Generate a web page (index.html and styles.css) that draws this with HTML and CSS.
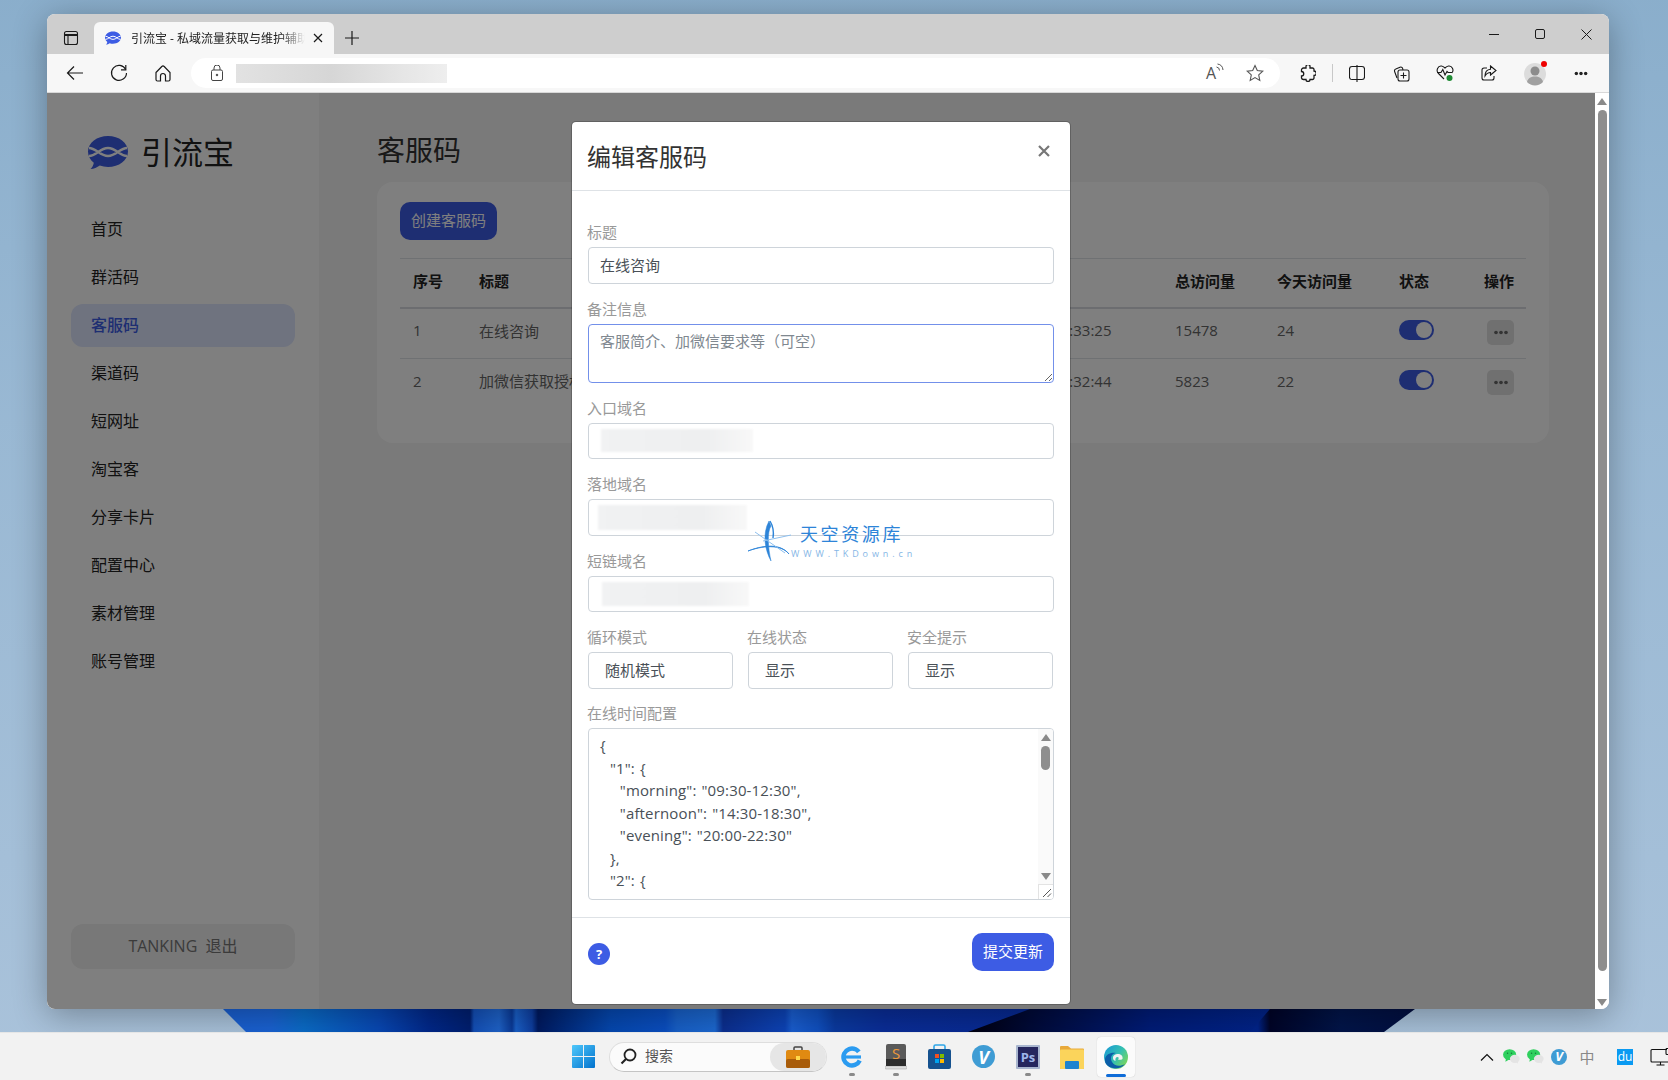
FILE: index.html
```html
<!DOCTYPE html>
<html lang="zh-CN">
<head>
<meta charset="utf-8">
<title>引流宝 - 私域流量获取与维护辅助工具</title>
<link rel="stylesheet" href="styles.css">
</head>
<body>
<svg class="defs" width="0" height="0" aria-hidden="true">
  <symbol id="brand" viewBox="0 0 40 33">
    <path fill="currentColor" d="M20 0C31 0 40 6.8 40 15.5S31 31 20 31c-3 0-5.700-.5-8.200-1.400C9 31.500 6 33 2.500 33c1.700-1.500 3-3.700 3.300-6.300C2.200 24 0 20 0 15.500 0 6.800 9 0 20 0Z"/>
    <path fill="none" stroke="#fff" stroke-width="2.500" d="M1 12C8 12 12 20 20 20S32 12 39 12M1 20C8 20 12 12 20 12S32 20 39 20"/>
  </symbol>
  <symbol id="resize" viewBox="0 0 10 10">
    <path fill="none" stroke="#555" stroke-width="1" d="M1 9 9 1M5.500 9 9 5.500"/>
  </symbol>
  <symbol id="dots" viewBox="0 0 18 6">
    <circle cx="3" cy="3" r="2.200" fill="currentColor"/><circle cx="9" cy="3" r="2.200" fill="currentColor"/><circle cx="15" cy="3" r="2.200" fill="currentColor"/>
  </symbol>
  <symbol id="wechat" viewBox="0 0 18 16">
    <ellipse cx="7" cy="6" rx="7" ry="5.800" fill="#2fd05e"/><path d="M3 10 2.500 13.500 7 11Z" fill="#2fd05e"/>
    <ellipse cx="12.500" cy="10.500" rx="5.200" ry="4.300" fill="#e4e4e4"/><path d="M14 14 16 15.800 15.700 13Z" fill="#e4e4e4"/>
    <circle cx="4.800" cy="4.600" r=".8" fill="#14803a"/><circle cx="9" cy="4.600" r=".8" fill="#14803a"/>
  </symbol>
</svg>

<div class="desktop">
  <div class="wallpaper"></div>

  <div class="browser">
    <div class="tabstrip">
      <div class="slot-tabs">
        <svg width="16" height="16" viewBox="0 0 16 16" fill="none" stroke="#1a1a1a" stroke-width="1.100"><rect x="1.500" y="1.500" width="13" height="13" rx="2"/><path d="M1.500 5H14.500" stroke-width="2"/><path d="M5 5V14.500"/></svg>
      </div>
      <div class="tab">
        <svg class="tab-fav" width="16" height="16"><use href="#brand"/></svg>
        <span class="tab-title">引流宝 - 私域流量获取与维护辅助</span>
        <svg class="tab-close" width="10" height="10" viewBox="0 0 10 10" stroke="#1a1a1a" stroke-width="1.200"><path d="M1 1 9 9M9 1 1 9"/></svg>
      </div>
      <div class="tab-new">
        <svg width="14" height="14" viewBox="0 0 14 14" stroke="#1a1a1a" stroke-width="1.200"><path d="M7 0V14M0 7H14"/></svg>
      </div>
      <div class="winctl">
        <span class="winbtn"><svg width="10" height="10" viewBox="0 0 10 10" stroke="#1a1a1a"><path d="M0 5.500H10"/></svg></span>
        <span class="winbtn"><svg width="10" height="10" viewBox="0 0 10 10" fill="none" stroke="#1a1a1a"><rect x=".5" y=".5" width="9" height="9" rx="1.500"/></svg></span>
        <span class="winbtn"><svg width="11" height="11" viewBox="0 0 11 11" stroke="#1a1a1a"><path d="M.5.5 10.500 10.500M10.500.5.5 10.500"/></svg></span>
      </div>
    </div>

    <div class="toolbar">
      <span class="tool"><svg width="18" height="16" viewBox="0 0 18 16" fill="none" stroke="#1a1a1a" stroke-width="1.200"><path d="M17 8H1.500M8 1.500 1.500 8 8 14.500"/></svg></span>
      <span class="tool"><svg width="18" height="18" viewBox="0 0 18 18" fill="none" stroke="#1a1a1a" stroke-width="1.200"><path d="M15.700 5.500A7.500 7.500 0 1 0 16.500 9"/><path d="M15.800 1V5.800H11"/></svg></span>
      <span class="tool"><svg width="16" height="17" viewBox="0 0 16 17" fill="none" stroke="#1a1a1a" stroke-width="1.200"><path d="M1 7.500 6.800 1.500a1.700 1.700 0 0 1 2.400 0L15 7.500V14.500a1.500 1.500 0 0 1-1.500 1.500H10.500V11a2.500 2.500 0 0 0-5 0V16H2.500A1.500 1.500 0 0 1 1 14.500Z"/></svg></span>
      <div class="address">
        <span class="addr-lock"><svg width="12" height="16" viewBox="0 0 12 16" fill="none" stroke="#444" stroke-width="1"><rect x=".5" y="5" width="11" height="10.500" rx="1.500"/><path d="M3 5V3a3 3 0 0 1 6 0V5"/><circle cx="6" cy="10" r=".8" fill="#444"/></svg></span>
        <span class="addr-blur"></span>
        <span class="addr-tool addr-first"><span class="read-a">A</span><svg width="8" height="9" viewBox="0 0 8 9" fill="none" stroke="#555" stroke-width="1"><path d="M.5 4a3.500 3.500 0 0 1 3 3.500M1.500 1a6.500 6.500 0 0 1 5.500 6"/></svg></span>
        <span class="addr-tool"><svg width="18" height="18" viewBox="0 0 18 18" fill="none" stroke="#555" stroke-width="1.100"><path d="M9 1.500 11.300 6.600 16.800 7.200 12.700 10.900 13.800 16.400 9 13.600 4.200 16.400 5.300 10.900 1.200 7.200 6.700 6.600Z"/></svg></span>
      </div>
      <span class="tool tool-puzzle"><svg width="16" height="17" viewBox="0 0 16 17" fill="none" stroke="#1a1a1a" stroke-width="1.300"><path d="M6 1.500a2 2 0 0 1 4 0V3h2.500a1.500 1.500 0 0 1 1.500 1.500V6a2.200 2.200 0 0 1 0 4.500V13a1.500 1.500 0 0 1-1.500 1.500H10a2 2 0 0 1-4 0H3.500A2 2 0 0 1 1.500 13V11a2 2 0 0 0 0-4.500V5a2 2 0 0 1 2-2H6Z"/></svg></span>
      <span class="tool-sep"></span>
      <span class="tool"><svg width="16" height="17" viewBox="0 0 16 17" fill="none" stroke="#1a1a1a" stroke-width="1.100"><rect x=".5" y="1.500" width="15" height="13" rx="2.500"/><path d="M8 0V17"/></svg></span>
      <span class="tool"><svg width="17" height="17" viewBox="0 0 17 17" fill="none" stroke="#1a1a1a" stroke-width="1.100"><path d="M4 13 1.600 6.500a2 2 0 0 1 1.200-2.600L7 2.200a2 2 0 0 1 2.600 1.200L10 5"/><rect x="5" y="5" width="11" height="11" rx="2"/><path d="M10.500 7.500V13.500M7.500 10.500H13.500"/></svg></span>
      <span class="tool"><svg width="18" height="18" viewBox="0 0 18 18" fill="none" stroke="#1a1a1a" stroke-width="1.100"><path d="M8 15 2.500 9.500C-.5 6.500 2 1.500 5.500 2c1.500.2 2.500 1 3.500 2 1-1 2-1.800 3.500-2C16 1.500 18.500 6 15.800 9"/><path d="M1 8.500H5L6.800 5.500 9 11 11 7.500 12 8.500H16"/><circle cx="13.500" cy="14" r="3" fill="#1f8a34" stroke="none"/></svg></span>
      <span class="tool"><svg width="16" height="16" viewBox="0 0 16 16" fill="none" stroke="#1a1a1a" stroke-width="1.100"><path d="M6 3H3a2 2 0 0 0-2 2V13a2 2 0 0 0 2 2H11a2 2 0 0 0 2-2V11"/><path d="M9.500 1 15 5.500 9.500 10V7.500C7 7.500 5.500 8.500 4 11c0-4 2-6.500 5.500-6.800Z"/></svg></span>
      <span class="tool tool-avatar">
        <svg width="24" height="26" viewBox="0 0 24 26"><circle cx="11" cy="14" r="11" fill="#dcdcdc"/><circle cx="11" cy="11" r="4.500" fill="#8c8c8c"/><path d="M3 22c1-4 4-5.500 8-5.500s7 1.500 8 5.500a11 11 0 0 1-16 0Z" fill="#a0a0a0"/><circle cx="20" cy="4" r="3" fill="#ee0000"/></svg>
      </span>
      <span class="tool tool-more"><svg width="14" height="5" viewBox="0 0 18 6" class="tool-dots"><use href="#dots"/></svg></span>
    </div>

    <div class="view">
      <div class="page">
        <aside class="sidebar">
          <div class="brand">
            <svg class="brand-logo" width="40" height="33"><use href="#brand"/></svg>
            <span class="brand-name">引流宝</span>
          </div>
          <nav class="nav">
            <a class="nav-item">首页</a>
            <a class="nav-item">群活码</a>
            <a class="nav-item active">客服码</a>
            <a class="nav-item">渠道码</a>
            <a class="nav-item">短网址</a>
            <a class="nav-item">淘宝客</a>
            <a class="nav-item">分享卡片</a>
            <a class="nav-item">配置中心</a>
            <a class="nav-item">素材管理</a>
            <a class="nav-item">账号管理</a>
          </nav>
          <div class="logout">TANKING&nbsp;&nbsp;退出</div>
        </aside>
        <main class="main">
          <h1 class="page-title">客服码</h1>
          <section class="card">
            <button class="btn-create">创建客服码</button>
            <table class="table">
              <thead>
                <tr>
                  <th class="c1">序号</th><th class="c2">标题</th><th class="c3">创建时间</th><th class="c4">总访问量</th><th class="c5">今天访问量</th><th class="c6">状态</th><th class="c7">操作</th>
                </tr>
              </thead>
              <tbody>
                <tr>
                  <td class="lead">1</td><td class="lead">在线咨询</td><td class="time">2022-08-26 10:33:25</td><td>15478</td><td>24</td>
                  <td class="ctl"><span class="toggle"></span></td>
                  <td class="ctl"><span class="more"><svg width="16" height="5"><use href="#dots"/></svg></span></td>
                </tr>
                <tr>
                  <td class="lead">2</td><td class="lead">加微信获取授权码</td><td class="time">2022-08-26 10:32:44</td><td>5823</td><td>22</td>
                  <td class="ctl"><span class="toggle"></span></td>
                  <td class="ctl"><span class="more"><svg width="16" height="5"><use href="#dots"/></svg></span></td>
                </tr>
              </tbody>
            </table>
          </section>
        </main>

        <div class="overlay">
          <div class="modal">
            <header class="modal-head">
              <h2 class="modal-title">编辑客服码</h2>
              <svg class="modal-x" width="12" height="12" viewBox="0 0 12 12" stroke="#777" stroke-width="2.200"><path d="M1 1 11 11M11 1 1 11"/></svg>
            </header>
            <div class="modal-body">
              <div class="group">
                <label class="label">标题</label>
                <input class="field input-text" value="在线咨询">
              </div>
              <div class="group">
                <label class="label">备注信息</label>
                <textarea class="field area" placeholder="客服简介、加微信要求等（可空）"></textarea>
              </div>
              <div class="group">
                <label class="label">入口域名</label>
                <div class="field"><span class="blur blur-a"></span></div>
              </div>
              <div class="group">
                <label class="label">落地域名</label>
                <div class="field"><span class="blur blur-b"></span></div>
              </div>
              <div class="group">
                <label class="label">短链域名</label>
                <div class="field"><span class="blur blur-c"></span></div>
              </div>
              <div class="triple">
                <div class="cell">
                  <label class="label">循环模式</label>
                  <select class="field pick"><option>随机模式</option></select>
                </div>
                <div class="cell">
                  <label class="label">在线状态</label>
                  <select class="field pick"><option>显示</option></select>
                </div>
                <div class="cell">
                  <label class="label">安全提示</label>
                  <select class="field pick"><option>显示</option></select>
                </div>
              </div>
              <div class="group-last">
                <label class="label">在线时间配置</label>
                <div class="json">
                  <pre class="json-text">{
  "1": {
    "morning": "09:30-12:30",
    "afternoon": "14:30-18:30",
    "evening": "20:00-22:30"
  },
  "2": {
    "morning": "09:30-12:30",
    "afternoon": "14:30-18:30"
  }
}</pre>
                  <div class="sb">
                    <span class="arrow-up"></span>
                    <span class="sb-thumb"></span>
                    <span class="arrow-down sb-down"></span>
                    <span class="sb-corner"><svg width="10" height="10"><use href="#resize"/></svg></span>
                  </div>
                </div>
              </div>
            </div>
            <footer class="modal-foot">
              <span class="help">?</span>
              <button class="btn-submit">提交更新</button>
            </footer>

            <div class="watermark">
              <svg class="wm-star" width="64" height="44" viewBox="0 0 64 44" fill="none">
                <path d="M1 31C14 26 32 22 42 34 36 26 20 24 1 31Z" fill="#2d84d8" stroke="#2d84d8" stroke-width=".8"/>
                <path d="M22 1C15 14 18 30 24 41 21 28 20 12 24 6Z" fill="#2d84d8" stroke="#2d84d8" stroke-width=".5"/>
                <path d="M23 1C26 6 27 12 26 18" stroke="#2d84d8" stroke-width="1.400"/>
                <path d="M8 12 38 33M16 21 44 15" stroke="#8dbfee" stroke-width="1"/>
              </svg>
              <div class="wm-text">
                <span class="wm-cn">天空资源库</span>
                <span class="wm-en">WWW.TKDown.cn</span>
              </div>
            </div>
          </div>
        </div>
      </div>
      <div class="page-sb">
        <span class="arrow-up"></span>
        <span class="page-thumb"></span>
        <span class="arrow-down"></span>
      </div>
    </div>
  </div>

  <div class="taskbar">
    <svg class="win-logo" width="23" height="23" viewBox="0 0 23 23">
      <defs>
        <linearGradient id="wg" x1="0" y1="0" x2="1" y2="1"><stop offset="0" stop-color="#4fc8fb"/><stop offset="1" stop-color="#0272cd"/></linearGradient>
      </defs>
      <path fill="url(#wg)" d="M0 1a1 1 0 0 1 1-1H11V11H0ZM12 0H22a1 1 0 0 1 1 1V11H12ZM0 12H11V23H1a1 1 0 0 1-1-1ZM12 12H23V22a1 1 0 0 1-1 1H12Z"/>
    </svg>
    <div class="search">
      <svg class="search-ic" width="17" height="17" viewBox="0 0 17 17" fill="none" stroke="#222" stroke-width="1.800"><circle cx="10" cy="7" r="5.500"/><path d="M6 11 1.500 15.500" stroke-width="2.200"/></svg>
      <span class="search-text">搜索</span>
      <span class="search-badge">
        <svg width="24" height="22" viewBox="0 0 24 22"><path d="M8 4V2a1 1 0 0 1 1-1h6a1 1 0 0 1 1 1V4" fill="none" stroke="#444" stroke-width="1.500"/><rect y="4" width="24" height="18" rx="2" fill="#e08a12"/><rect y="13" width="24" height="9" rx="2" fill="#a85c0a"/><rect x="10" y="10" width="4" height="4" fill="#ffd84a"/></svg>
      </span>
    </div>
    <div class="apps">
      <span class="app dot"><svg width="22" height="24" viewBox="0 0 22 24" fill="none"><circle cx="11" cy="12" r="8.500" stroke="#2b9bf0" stroke-width="4.500" stroke-dasharray="44 9" transform="rotate(25 11 12)"/><path d="M3 12H20" stroke="#2b9bf0" stroke-width="3.200"/></svg></span>
      <span class="app dot"><svg width="22" height="26" viewBox="0 0 22 26"><rect x="0" y="22" width="22" height="3" rx="1" fill="#ddd" stroke="#999" stroke-width=".5"/><rect x="1" y="0" width="20" height="22" rx="2" fill="#5a5a5a"/><rect x="1" y="15" width="20" height="7" fill="#2c2c2c"/><text x="11" y="15" class="sub-s">S</text></svg></span>
      <span class="app"><svg width="23" height="25" viewBox="0 0 23 25"><path d="M6 6V2.500A1.500 1.500 0 0 1 7.500 1h8A1.500 1.500 0 0 1 17 2.500V6" fill="none" stroke="#2fa6e8" stroke-width="1.600"/><rect y="5" width="23" height="20" rx="2" fill="#16528f"/><rect x="7" y="10" width="4" height="4" fill="#f25022"/><rect x="12" y="10" width="4" height="4" fill="#7fba00"/><rect x="7" y="15" width="4" height="4" fill="#00a4ef"/><rect x="12" y="15" width="4" height="4" fill="#ffb900"/></svg></span>
      <span class="app"><span class="v-ic">V</span></span>
      <span class="app dot"><svg width="24" height="24" viewBox="0 0 24 24"><rect width="24" height="24" rx="1" fill="#a9b6cf"/><rect x="2" y="2" width="20" height="20" fill="#25265e"/><text x="12" y="17" class="ps-t">Ps</text></svg></span>
      <span class="app"><svg width="24" height="24" viewBox="0 0 24 24"><path d="M0 2a1 1 0 0 1 1-1H8L11 3.500H23a1 1 0 0 1 1 1V23a1 1 0 0 1-1 1H1a1 1 0 0 1-1-1Z" fill="#e8a93b"/><rect y="4.500" width="24" height="19.500" rx="1" fill="#fbd45b"/><rect x="5" y="16" width="14" height="8" rx="1" fill="#1e83cf"/></svg></span>
      <span class="app app-on"><svg width="24" height="24" viewBox="0 0 24 24"><defs><linearGradient id="eg" x1="0" y1="0" x2="1" y2=".7"><stop offset="0" stop-color="#1796d8"/><stop offset=".6" stop-color="#35c1b0"/><stop offset="1" stop-color="#7ad65a"/></linearGradient></defs><circle cx="12" cy="12" r="12" fill="url(#eg)"/><path d="M1 14C2 9 7 7 12 8 7 9 6 13 8 17c2 4 8 5 13 2-3 4-8 5-12 4C4 22 .5 19 1 14Z" fill="#0c5ea8"/><path d="M9 13c0-3 2.500-4 5-4 3.500 0 5 2.500 4.500 5-1 1-3.500 1-4.500.5 1-1 1-2.500-.5-2.500S11 13.500 11.500 16C10 15.500 9 14.500 9 13Z" fill="#f2f2f2"/></svg></span>
    </div>
    <div class="tray">
      <span class="tray-i"><svg width="14" height="8" viewBox="0 0 14 8" fill="none" stroke="#111" stroke-width="1.200"><path d="M1 7.500 7 1.500 13 7.500"/></svg></span>
      <span class="tray-i"><svg width="17" height="15"><use href="#wechat"/></svg></span>
      <span class="tray-i"><svg width="17" height="15"><use href="#wechat"/></svg></span>
      <span class="tray-i"><span class="v-ic v-small">V</span></span>
      <span class="tray-i tray-ime">中</span>
      <span class="tray-i tray-du"><span class="du">du</span></span>
      <span class="tray-i tray-mon"><svg width="24" height="18" viewBox="0 0 24 18" fill="none" stroke="#111" stroke-width="1.100"><path d="M17 1.500H2a1 1 0 0 0-1 1V13a1 1 0 0 0 1 1H19a1 1 0 0 0 1-1V9M10.500 14V17M6.500 17H14.500"/><rect x="16" y=".5" width="7" height="6" rx="1"/></svg></span>
    </div>
  </div>
</div>
</body>
</html>
```

FILE: styles.css
```css
* { box-sizing: border-box; }
html, body { margin: 0; height: 100%; overflow: hidden; }
body { font-family: "Open Sans", "Noto Sans CJK SC", sans-serif; color: #212529; }
.defs { position: absolute; }
svg { display: block; flex: none; }

.desktop {
  position: relative;
  width: 1668px;
  height: 1080px;
  overflow: hidden;
  background:
    linear-gradient(180deg, rgba(135,172,202,.9) 0, rgba(143,178,207,.6) 40%, rgba(172,196,220,.2) 100%),
    #a9c2da;
}
.wallpaper {
  position: absolute;
  left: 0; right: 0; top: 1009px; height: 23px;
  clip-path: polygon(223px 0, 1415px 0, 1384px 23px, 246px 23px);
  background: linear-gradient(90deg,
    #1a5fd0 223px, #1a62d2 271px, #0a6cc8 304px, #0848b4 379px, #02288a 429px, #001f70 470px,
    #1450b8 474px, #1e62c8 499px, #0a3a98 512px, #1a60c8 516px, #0e3ea0 532px, #001a60 538px,
    #0548b0 611px, #0a4ec0 665px, #1860c8 677px, #1c68d0 715px, #0c2f90 723px, #0d44b8 785px,
    #1a5ed0 792px, #1050c0 818px, #0a3aa0 835px, #0a2d98 885px, #02248a 1258px, #000428 1270px,
    #02154a 1341px, #020f40 1415px);
}
.wallpaper::after {
  content: "";
  position: absolute;
  inset: 0;
  clip-path: polygon(1030px 0, 1270px 0, 1250px 23px, 968px 23px);
  background: linear-gradient(90deg, #00000f 968px, #000a38 1030px, #001c78 1150px, #02248a 1270px);
}

/* browser window */
.browser {
  position: absolute;
  left: 47px; top: 14px;
  width: 1562px; height: 995px;
  display: flex;
  flex-direction: column;
  border-radius: 8px;
  overflow: hidden;
  box-shadow: 0 6px 34px rgba(0,0,0,.32);
  background: #fff;
}
.tabstrip { height: 40px; flex: none; background: #cecece; display: flex; }
.slot-tabs { width: 36px; height: 32px; margin: 8px 0 0 6px; display: flex; align-items: center; justify-content: center; }
.tab {
  width: 240px; height: 32px; margin: 8px 0 0 5px;
  padding: 0 11px;
  background: #f7f7f7;
  border-radius: 6px 6px 0 0;
  display: flex; align-items: center;
}
.tab-fav { color: #3d5ce4; }
.tab-title {
  width: 174px; margin-left: 10px;
  font-size: 12px; color: #222;
  white-space: nowrap; overflow: hidden;
  -webkit-mask-image: linear-gradient(90deg, #000 86%, transparent);
  mask-image: linear-gradient(90deg, #000 86%, transparent);
}
.tab-close { margin-left: 8px; }
.tab-new { width: 28px; height: 32px; margin: 8px 0 0 4px; display: flex; align-items: center; justify-content: center; }
.winctl { margin-left: auto; display: flex; height: 40px; }
.winbtn { width: 46px; display: flex; align-items: center; justify-content: center; }

.toolbar {
  height: 39px; flex: none;
  background: #f7f7f7;
  border-bottom: 1px solid #d8d8d8;
  padding-left: 6px;
  display: flex; align-items: center;
}
.tool { width: 44px; height: 30px; display: flex; align-items: center; justify-content: center; flex: none; }
.address {
  width: 1089px; height: 30px; margin: 0 6px;
  background: #fff; border-radius: 15px;
  padding: 0 5px 0 14px;
  display: flex; align-items: center;
  flex: none;
}
.addr-lock { width: 24px; display: flex; justify-content: center; }
.addr-blur { width: 211px; height: 19px; margin-left: 7px; background: linear-gradient(90deg, #e2e2e2, #d6d6d6 45%, #e6e6e6 80%, #eeeeee); }
.addr-tool { width: 40px; display: flex; justify-content: center; }
.addr-first { margin-left: auto; align-items: flex-start; }
.read-a { font-size: 16px; line-height: 20px; color: #555; }
.tool-sep { width: 1px; height: 18px; margin: 0 2px; background: #c8c8c8; flex: none; }
.tool-avatar { margin-left: 3px; }
.tool-more { margin-left: 1px; }
.tool-dots { color: #222; }

.view { flex: 1; display: flex; min-height: 0; }
.page { position: relative; flex: 1; display: flex; min-width: 0; background: #f5f5f5; }
.page-sb { width: 14px; flex: none; background: #fff; display: flex; flex-direction: column; align-items: center; padding: 5px 0 3px; }
.page-thumb { width: 9px; flex: 1; margin: 5px 0 28px; border-radius: 5px; background: #8e8e8e; }
.page-sb .arrow-down { margin-top: auto; }
.arrow-up { width: 0; height: 0; border-left: 5px solid transparent; border-right: 5px solid transparent; border-bottom: 7px solid #8a8a8a; flex: none; }
.arrow-down { width: 0; height: 0; border-left: 5px solid transparent; border-right: 5px solid transparent; border-top: 7px solid #8a8a8a; flex: none; }

/* sidebar */
.sidebar { width: 272px; flex: none; background: #fff; padding: 43px 24px 40px; display: flex; flex-direction: column; }
.brand { display: flex; align-items: center; padding-left: 17px; height: 33px; }
.brand-logo { color: #3d5ce4; }
.brand-name { margin-left: 13px; font-size: 31px; line-height: 33px; color: #222; font-weight: 400; }
.nav { margin-top: 39px; display: flex; flex-direction: column; gap: 5.5px; }
.nav-item { height: 42.5px; padding: 0 0 2px 20px; display: flex; align-items: center; border-radius: 12px; font-size: 16px; color: #222; }
.nav-item.active { background: #dee6ff; color: #3d5ce4; font-weight: 500; }
.logout { margin-top: auto; height: 45px; padding-bottom: 3px; border-radius: 12px; background: #f0f0f0; display: flex; align-items: center; justify-content: center; font-size: 16px; color: #777; }

/* main */
.main { flex: 1; min-width: 0; padding: 37px 46px 0 58px; }
.page-title { margin: 0; font-size: 28px; line-height: 40px; font-weight: 400; color: #333; }
.card { margin-top: 12px; height: 261px; background: #fff; border-radius: 16px; padding: 20px 23px 0; }
.btn-create { display: block; width: 97px; height: 38px; padding: 0 0 4px; border: 0; border-radius: 10px; background: #3d5ce4; color: #fff; font: inherit; font-size: 15px; }
.table { margin-top: 18px; width: 1126px; border-collapse: collapse; table-layout: fixed; font-size: 15px; }
.table th { height: 49px; padding: 0 12px 4px; text-align: left; font-weight: 700; color: #222; border-top: 1px solid #dee2e6; border-bottom: 2px solid #d8dbe0; white-space: nowrap; }
.table td { height: 50.5px; padding: 0 12px 6px; color: #666; white-space: nowrap; border-bottom: 1px solid #dee2e6; overflow: hidden; }
.table th.c1, .table th.c2, .table td.lead { padding-left: 13px; }
.table td.time { padding-left: 15px; }
.table tbody tr:last-child td { border-bottom: 0; }
.table td.ctl { vertical-align: top; padding: 11px 12px 0; overflow: visible; }
.c1 { width: 66px; }
.c2 { width: 489px; }
.c3 { width: 208px; }
.c4 { width: 102px; }
.c5 { width: 122px; }
.c6 { width: 85px; }
.c7 { width: 54px; }
.toggle { display: block; position: relative; width: 35px; height: 20px; border-radius: 10px; background: #3d5ce4; }
.toggle::after { content: ""; position: absolute; right: 2px; top: 2px; width: 16px; height: 16px; border-radius: 50%; background: #fff; }
.more { width: 27px; height: 25px; margin-left: 3px; border-radius: 5px; background: #e0e0e0; color: #666; display: flex; align-items: center; justify-content: center; }

/* modal */
.overlay { position: absolute; inset: 0; background: rgba(0,0,0,.5); display: flex; justify-content: center; align-items: flex-start; }
.modal {
  position: relative;
  width: 500px; height: 884px; margin-top: 28px;
  background: #fff;
  border: 1px solid rgba(0,0,0,.2);
  background-clip: padding-box;
  border-radius: 5px;
  display: flex; flex-direction: column;
}
.modal-head { height: 69px; flex: none; padding: 0 18px 0 15px; border-bottom: 1px solid #dee2e6; display: flex; align-items: center; justify-content: space-between; }
.modal-title { margin: 0; font-size: 24px; line-height: 36px; font-weight: 400; color: #333; position: relative; top: 1px; }
.modal-x { margin: -10px 2px 0 0; }
.modal-body { flex: 1; padding: 30px 16px 0; }
.group { margin-bottom: 14px; }
.group-last { margin-bottom: 0; }
.label { display: block; margin: 0 0 3.5px -1px; font-size: 15px; line-height: 22.5px; color: #999; }
.field {
  display: flex; align-items: center;
  width: 100%; height: 36.5px;
  padding: 0 11px;
  border: 1px solid #ced4da;
  border-radius: 4px;
  background: #fff;
  font: inherit; font-size: 15px;
  color: #495057;
  outline: 0;
}
.input-text { padding-bottom: 2px; }
.area { display: block; height: 59px; padding: 5px 11px; line-height: 22.5px; border-color: #7390ea; resize: vertical; }
.area::placeholder { color: #808890; opacity: 1; }
.blur { display: block; filter: blur(1px); background: linear-gradient(90deg, #f1f2f3, #eeeff0 70%, #f8f8f8); }
.blur-a { width: 152px; height: 23px; margin-left: 1px; }
.blur-b { width: 149px; height: 25px; margin-left: -2px; }
.blur-c { width: 147px; height: 24px; margin-left: 2px; }
.triple { display: flex; gap: 15px; margin-bottom: 13.5px; }
.cell { width: 145px; }
.pick { appearance: none; -webkit-appearance: none; padding-left: 16px; }
.json { display: flex; height: 172px; border: 1px solid #ced4da; border-radius: 4px; overflow: hidden; }
.json-text { flex: 1; margin: 0; padding: 5px 11px; font: inherit; font-size: 15px; line-height: 22.5px; letter-spacing: .15px; word-spacing: .9px; color: #495057; overflow: hidden; }
.sb { width: 15px; flex: none; background: #fafafa; display: flex; flex-direction: column; align-items: center; padding-top: 5px; }
.sb-thumb { width: 9px; height: 24px; margin-top: 5px; border-radius: 5px; background: #8e8e8e; flex: none; }
.sb-down { margin-top: auto; margin-bottom: 4px; }
.sb-corner { width: 15px; height: 15px; background: #fff; border: 1px solid #e3e3e3; border-width: 1px 0 0 1px; display: flex; align-items: flex-end; justify-content: flex-end; padding: 0 1px 1px 0; flex: none; }
.modal-foot { height: 87px; flex: none; padding: 15px 16px 0; border-top: 1px solid #dee2e6; display: flex; justify-content: space-between; align-items: flex-start; }
.help { width: 22px; height: 22px; margin-top: 10px; border-radius: 50%; background: #3d5ce4; color: #fff; font-size: 13px; font-weight: 700; display: flex; align-items: center; justify-content: center; }
.btn-submit { width: 82px; height: 38px; padding: 0 0 4px; border: 0; border-radius: 10px; background: #3d5ce4; color: #fff; font: inherit; font-size: 15px; }

.watermark { position: absolute; left: 175px; top: 395px; display: flex; pointer-events: none; }
.wm-star { margin-top: 3px; }
.wm-text { margin-left: -30px; display: flex; flex-direction: column; }
.wm-cn { margin-left: 19px; font-size: 18px; line-height: 24px; letter-spacing: 2.600px; color: #2d84d8; font-weight: 400; margin-top: 5px; }
.wm-en { font-size: 9px; line-height: 12px; letter-spacing: 3.900px; color: #86b6e6; margin-top: 2px; white-space: nowrap; margin-left: 10px; }

/* taskbar */
.taskbar { position: absolute; left: 0; right: 0; bottom: 0; height: 48px; background: #f2f2f2; border-top: 1px solid #e6e6e6; display: flex; align-items: center; padding-left: 572px; }
.win-logo { margin-top: -1px; }
.search { width: 218px; height: 30px; margin-left: 14px; border: 1px solid #dedede; border-bottom-color: #c4c4c4; border-radius: 15px; background: #fbfbfb; display: flex; align-items: center; position: relative; }
.search-ic { margin-left: 10px; }
.search-text { margin-left: 8px; padding-bottom: 3px; font-size: 14px; color: #555; }
.search-badge { margin-left: auto; width: 56px; height: 28px; border-radius: 14px; background: #e6e6e6; display: flex; align-items: center; justify-content: center; }
.apps { margin-left: 2.500px; display: flex; }
.app { position: relative; width: 44px; height: 40px; display: flex; align-items: center; justify-content: center; }
.app.dot::after { content: ""; position: absolute; left: 19px; bottom: 1px; width: 6px; height: 3px; border-radius: 2px; background: #8a8a8a; }
.app-on { width: 38px; margin: 0 3px; background: #fbfbfb; border-radius: 4px; box-shadow: 0 0 1px rgba(0,0,0,.25); }
.app-on::after { content: ""; position: absolute; left: 9px; bottom: 0; width: 20px; height: 3px; border-radius: 2px; background: #0f6cd8; }
.sub-s { font-family: "Open Sans", sans-serif; font-size: 15px; fill: #f09a3a; text-anchor: middle; }
.ps-t { font-family: "Open Sans", sans-serif; font-size: 13px; font-weight: 700; fill: #9fb6ea; text-anchor: middle; }
.v-ic { width: 23px; height: 23px; border-radius: 50%; background: #3f9cd4; color: #fff; font-size: 18px; font-weight: 700; font-style: italic; display: flex; align-items: center; justify-content: center; line-height: 1; }
.tray { margin-left: auto; margin-right: -6px; display: flex; align-items: center; }
.tray-i { width: 24px; height: 24px; display: flex; align-items: center; justify-content: center; flex: none; }
.v-small { width: 16px; height: 16px; font-size: 13px; }
.tray-ime { margin-left: 4px; font-size: 15px; color: #888; }
.tray-du { margin-left: 14px; }
.du { width: 16px; height: 16px; background: #0a9af2; color: #fff; font-size: 12px; line-height: 15px; text-align: center; }
.tray-mon { margin-left: 13px; }
```
